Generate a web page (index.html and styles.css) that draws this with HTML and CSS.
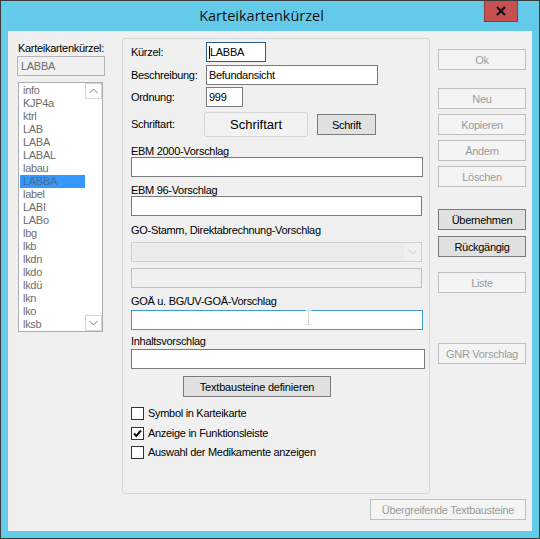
FILE: index.html
```html
<!DOCTYPE html>
<html lang="de">
<head>
<meta charset="utf-8">
<title>Karteikartenkürzel</title>
<link rel="stylesheet" href="styles.css">
</head>
<body>
<div class="window">
  <div class="titlebar">
    <div class="title">Karteikartenkürzel</div>
    <div class="close"><svg width="12" height="10" viewBox="0 0 12 10"><path d="M2 1 L10 9 M10 1 L2 9" stroke="#111" stroke-width="2.2" fill="none"/></svg></div>
  </div>
  <div class="client">
    <div class="main">
      <div class="left">
        <div class="left-label">Karteikartenkürzel:</div>
        <div class="tb-disabled">LABBA</div>
        <div class="listbox">
          <ul class="items">
            <li>info</li><li>KJP4a</li><li>ktrl</li><li>LAB</li><li>LABA</li><li>LABAL</li><li>labau</li>
            <li class="sel">LABBA</li><li>label</li><li>LABI</li><li>LABo</li><li>lbg</li><li>lkb</li>
            <li>lkdn</li><li>lkdo</li><li>lkdü</li><li>lkn</li><li>lko</li><li>lksb</li>
          </ul>
          <div class="vscroll">
            <div class="sarrow"><svg width="9" height="6" viewBox="0 0 9 6"><path d="M0.5 5 L4.5 1 L8.5 5" stroke="#777" stroke-width="1" fill="none"/></svg></div>
            <div class="strack"></div>
            <div class="sarrow"><svg width="9" height="6" viewBox="0 0 9 6"><path d="M0.5 1 L4.5 5 L8.5 1" stroke="#777" stroke-width="1" fill="none"/></svg></div>
          </div>
        </div>
      </div>

      <div class="panel">
        <div class="frow r1"><span class="flabel">Kürzel:</span><div class="inp focus w-kurz"><span class="caret"></span>LABBA</div></div>
        <div class="frow r2"><span class="flabel">Beschreibung:</span><div class="inp w-besch">Befundansicht</div></div>
        <div class="frow r3"><span class="flabel">Ordnung:</span><div class="inp w-ord">999</div></div>
        <div class="frow r4"><span class="flabel fl-font">Schriftart:</span><div class="fontbox">Schriftart</div><div class="btn btn-schrift">Schrift</div></div>

        <div class="glabel g1">EBM 2000-Vorschlag</div>
        <div class="inp wide w422"></div>
        <div class="glabel g2">EBM 96-Vorschlag</div>
        <div class="inp wide w421"></div>
        <div class="glabel g3">GO-Stamm, Direktabrechnung-Vorschlag</div>
        <div class="combo"><div class="combo-field"></div><div class="combo-btn"><svg width="9" height="6" viewBox="0 0 9 6"><path d="M0.5 1 L4.5 5 L8.5 1" stroke="#c4c4c4" stroke-width="1" fill="none"/></svg></div></div>
        <div class="tb-dis2"></div>
        <div class="glabel g4">GOÄ u. BG/UV-GOÄ-Vorschlag</div>
        <div class="inp wide w422 hot"><svg class="ibeam" width="7" height="15" viewBox="0 0 7 15"><path d="M0.5 0.5 H6.5 M3.5 0.5 V14.5 M0.5 14.5 H6.5" stroke="#d8d8d8" stroke-width="1" fill="none"/></svg></div>
        <div class="glabel g5">Inhaltsvorschlag</div>
        <div class="inp wide w424"></div>

        <div class="btn btn-text">Textbausteine definieren</div>

        <div class="checks">
          <div class="chk"><span class="box"></span><span>Symbol in Karteikarte</span></div>
          <div class="chk"><span class="box"><svg width="11" height="11" viewBox="0 0 11 11"><path d="M2 5.5 L4.3 8 L9 2.5" stroke="#111" stroke-width="2" fill="none"/></svg></span><span>Anzeige in Funktionsleiste</span></div>
          <div class="chk"><span class="box"></span><span>Auswahl der Medikamente anzeigen</span></div>
        </div>
      </div>

      <div class="right">
        <div class="btn dis b-ok">Ok</div>
        <div class="btn dis b-neu">Neu</div>
        <div class="btn dis b-next">Kopieren</div>
        <div class="btn dis b-next">Ändern</div>
        <div class="btn dis b-next">Löschen</div>
        <div class="btn b-ueber">Übernehmen</div>
        <div class="btn b-rueck">Rückgängig</div>
        <div class="btn dis b-liste">Liste</div>
        <div class="btn dis b-gnr">GNR Vorschlag</div>
      </div>
    </div>
    <div class="footer">
      <div class="btn dis b-foot">Übergreifende Textbausteine</div>
    </div>
  </div>
</div>
</body>
</html>
```

FILE: styles.css
```css
* { box-sizing: border-box; }
html, body { margin: 0; padding: 0; }
body {
  font-family: "Liberation Sans", Arial, sans-serif;
  font-size: 11px;
  color: #000;
  background: #fff;
}
.window {
  width: 540px;
  height: 539px;
  border: 1px solid #3a3a3a;
  background: #64caea;
  display: flex;
  flex-direction: column;
}
.titlebar {
  height: 30px;
  display: flex;
  align-items: flex-start;
}
.title {
  flex: 1;
  padding-left: 38px;
  text-align: center;
  font-family: "Open Sans", "Noto Sans", sans-serif;
  font-size: 14.5px;
  line-height: 30px;
  color: #111;
}
.close {
  width: 34px;
  height: 21px;
  margin-right: 21px;
  background: #c75050;
  border: 1px solid #8e3a3a;
  border-top: none;
  display: flex;
  align-items: center;
  justify-content: center;
}
.client {
  margin: 0 7px;
  height: 500px;
  background: #f0f0f0;
  display: flex;
  flex-direction: column;
  letter-spacing: -0.3px;
}
.main { display: flex; align-items: flex-start; }

/* left column */
.left { margin-left: 9px; width: 88px; padding-top: 11px; }
.left-label { line-height: 13px; padding-left: 1px; white-space: nowrap; }
.tb-disabled {
  margin-top: 1px;
  height: 20px;
  border: 1px solid #b4b4b4;
  background: #f0f0f0;
  color: #6d6d6d;
  line-height: 18px;
  padding-left: 3px;
}
.listbox {
  margin: 6px 0 0 1px;
  width: 85px;
  height: 250px;
  border: 1px solid #abadb3;
  background: #fff;
  display: flex;
}
.items {
  list-style: none;
  margin: 0;
  padding: 1px 0 0 1px;
  flex: 1;
  color: #6d6d6d;
}
.items li { height: 13px; line-height: 13px; padding-left: 3px; }
.items li.sel { background: #3399ff; color: #4d6b94; }
.vscroll { width: 17px; display: flex; flex-direction: column; }
.sarrow {
  height: 16px;
  border: 1px solid #d4d4d4;
  background: #fff;
  display: flex;
  align-items: center;
  justify-content: center;
}
.strack { flex: 1; background: #fff; }

/* center panel */
.panel {
  margin: 7px 0 0 17px;
  width: 308px;
  height: 456px;
  border: 1px solid #d5d5d5;
  border-radius: 3px;
  padding-left: 8px;
  display: flex;
  flex-direction: column;
  align-items: flex-start;
}
.frow { display: flex; align-items: center; }
.r1 { margin-top: 3px; }
.r2 { margin-top: 3px; }
.r3 { margin-top: 2px; }
.r4 { margin-top: 5px; }
.flabel { width: 75px; line-height: 13px; }
.fl-font { width: 73px; }
.inp {
  height: 20px;
  border: 1px solid #7a7a7a;
  background: #fff;
  line-height: 18px;
  padding-left: 2px;
  position: relative;
  display: flex;
  align-items: center;
}
.inp.focus { border-color: #2a5d8f; }
.inp.hot { border-color: #3d9ad8; }
.caret { width: 1px; height: 13px; background: #000; margin-right: 0; }
.w-kurz { width: 60px; }
.w-besch { width: 172px; }
.w-ord { width: 37px; }
.fontbox {
  width: 104px;
  height: 25px;
  border: 1px solid #d6d6d6;
  border-radius: 3px;
  background: #f2f2f2;
  font-size: 13px;
  letter-spacing: 0;
  display: flex;
  align-items: center;
  justify-content: center;
}
.btn {
  height: 21px;
  border: 1px solid #7a7a7a;
  background: #e1e1e1;
  display: flex;
  align-items: center;
  justify-content: center;
  white-space: nowrap;
}
.btn.dis {
  border-color: #bfbfbf;
  background: #f4f4f4;
  color: #9c9c9c;
}
.btn-schrift { width: 59px; margin-left: 9px; }

.glabel { line-height: 11px; height: 11px; }
.g1 { margin-top: 9px; }
.g2 { margin-top: 8px; }
.g3 { margin-top: 9px; }
.g4 { margin-top: 8px; }
.g5 { margin-top: 6px; }
.g4 + .inp { margin-top: 3px; }
.g5 + .inp { margin-top: 2px; }
.w422 { width: 292px; }
.w421 { width: 291px; }
.w424 { width: 294px; }
.ibeam { position: absolute; left: 173px; top: -1px; }

.combo {
  margin-top: 6px;
  width: 291px;
  height: 20px;
  border: 1px solid #d0d0d0;
  background: #ebebeb;
  display: flex;
}
.combo-field { flex: 1; }
.combo-btn {
  width: 17px;
  display: flex;
  align-items: center;
  justify-content: center;
  background: #f0f0f0;
}
.tb-dis2 {
  margin-top: 6px;
  width: 291px;
  height: 20px;
  border: 1px solid #bfbfbf;
  background: #f0f0f0;
}
.btn-text { width: 148px; margin: 7px 0 0 52px; letter-spacing: -0.2px; }

.checks { margin-top: 10px; display: flex; flex-direction: column; gap: 6.5px; }
.chk { display: flex; align-items: center; height: 13px; gap: 4px; line-height: 13px; }
.box {
  width: 13px;
  height: 13px;
  border: 1px solid #333;
  background: #fff;
  display: flex;
  align-items: center;
  justify-content: center;
}

/* right column */
.right { margin-left: 8px; width: 88px; padding-top: 18px; display: flex; flex-direction: column; }
.b-neu { margin-top: 18px; }
.b-next { margin-top: 5px; }
.b-ueber { margin-top: 22px; }
.b-rueck { margin-top: 6px; }
.b-liste { margin-top: 15px; }
.b-gnr { margin-top: 50px; }

.footer { display: flex; justify-content: flex-end; margin-top: 5px; padding-right: 6px; }
.b-foot { width: 156px; }
```
